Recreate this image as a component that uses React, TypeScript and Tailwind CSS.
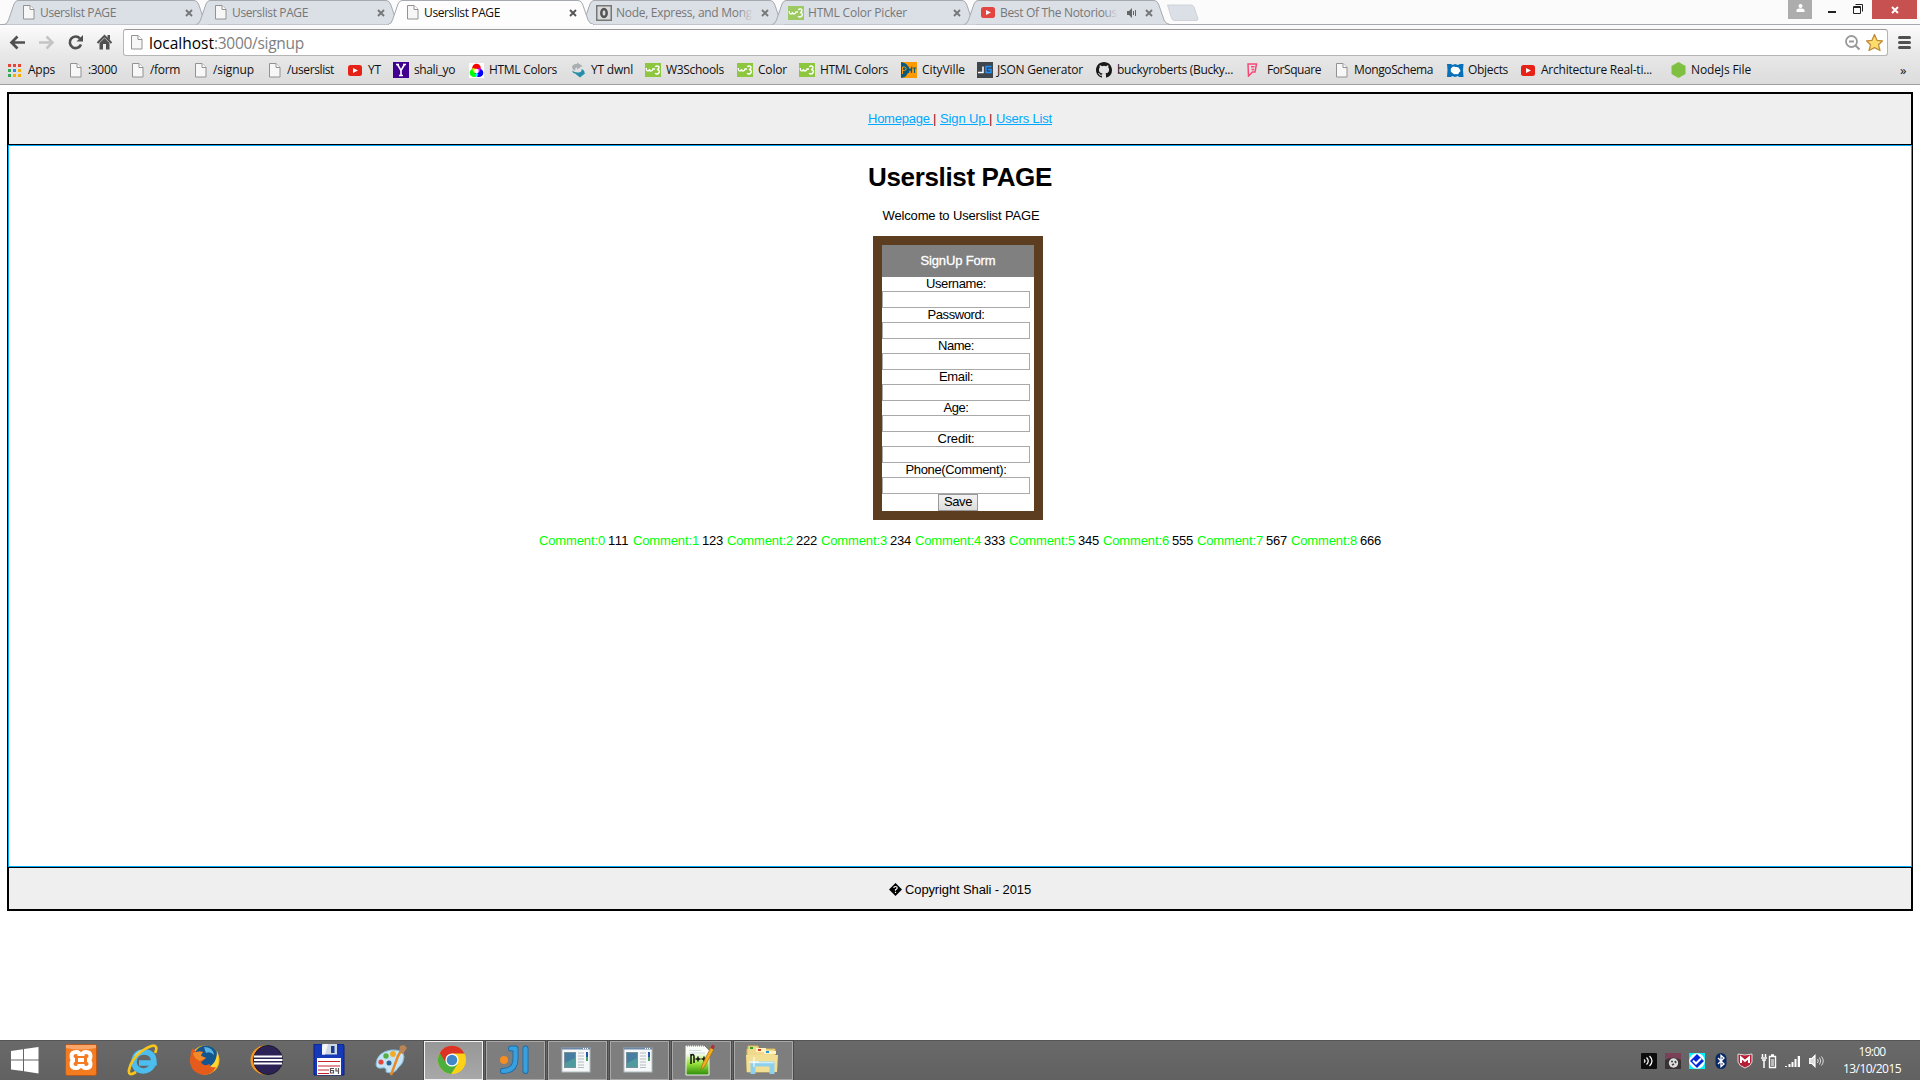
import { useLayoutEffect, useRef, useState, type ReactNode } from "react";

/** One line of text whose tracking is adjusted so that it spans `width` pixels. */
function Fit({ text, width, className = "" }: { text: string; width: number; className?: string }) {
  const ref = useRef<HTMLSpanElement>(null);
  const [spacing, setSpacing] = useState(0);
  useLayoutEffect(() => {
    if (!ref.current) return;
    const natural = ref.current.getBoundingClientRect().width - spacing * text.length;
    setSpacing((width - natural) / text.length);
  }, [text, width]);
  return (
    <span ref={ref} className={`inline-block whitespace-pre ${className}`} style={{ letterSpacing: `${spacing}px` }}>
      {text}
    </span>
  );
}

/* ---------- small icons ---------- */

const PageIcon = () => (
  <svg width="12" height="15" viewBox="0 0 12 15" className="block">
    <path d="M.5 .5H7L11 4.5V14H.5Z" fill="#f7f7f7" stroke="#929292" />
    <path d="M7 .5V4.5H11" fill="#fff" stroke="#929292" />
  </svg>
);
const YouTubeIcon = () => (
  <svg width="14" height="11" viewBox="0 0 14 11" className="block">
    <rect width="14" height="11" rx="2.5" fill="#e62117" />
    <path d="M5 3L10 5.5L5 8Z" fill="#fff" />
  </svg>
);
const W3Icon = () => (
  <svg width="16" height="14" viewBox="0 0 16 14" className="block">
    <rect width="16" height="14" fill="#8dc63f" />
    <path d="M1.300 5V6.500Q1.500 8 3 8Q4.300 8 4.500 6V6.500Q4.800 8 6 8Q7.500 8 8 6H10" fill="none" stroke="#fff" strokeWidth="1.300" />
    <path d="M10.300 4Q11 2.800 12.500 3Q14.200 3.300 14 4.800Q13.700 6.200 12 6.500Q14.600 6.700 14.300 9Q13.800 11.200 11.500 11Q10.500 10.800 10.300 10" fill="none" stroke="#fff" strokeWidth="1.400" />
  </svg>
);
const AppsIcon = () => (
  <svg width="13" height="13" viewBox="0 0 13 13" className="block">
    {["#ea4335", "#ea4335", "#ea4335", "#34a853", "#2a8bf2", "#f9ab00", "#34a853", "#f9ab00", "#f9ab00"].map((c, i) => (
      <rect key={i} x={(i % 3) * 5} y={Math.floor(i / 3) * 5} width="3" height="3" fill={c} />
    ))}
  </svg>
);
const YahooIcon = () => (
  <svg width="16" height="16" viewBox="0 0 16 16" className="block">
    <rect width="16" height="16" fill="#400090" />
    <path d="M3 2.5H6M10 2.5H13M4.5 2.5L8 8.5L11.5 2.5M8 8.5V13.5M6 13.5H10" fill="none" stroke="#fff" strokeWidth="1.6" />
  </svg>
);
const RgbIcon = () => (
  <svg width="15" height="15" viewBox="0 0 15 15" className="block">
    <rect width="15" height="15" fill="#fff" />
    <circle cx="7.5" cy="5" r="4.3" fill="#f00" />
    <circle cx="5" cy="9.7" r="4.3" fill="#0f0" />
    <circle cx="10" cy="9.7" r="4.3" fill="#00f" />
    <path d="M3.5 5.6Q5 5 7.5 6L6 10Q3 8 3.5 5.6Z" fill="#ff0" />
    <path d="M11.5 5.6Q10 5 7.5 6L9 10Q12 8 11.5 5.6Z" fill="#f0f" />
    <path d="M5.5 12L7.5 9L9.4 12L7.5 13.3Z" fill="#0ff" />
    <circle cx="7.5" cy="8" r="2.2" fill="#fff" />
  </svg>
);
const SyncIcon = () => (
  <svg width="15" height="16" viewBox="0 0 15 16" className="block">
    <path d="M1 5.500Q1.500 1.500 6 2V.5L11.500 4L6 7.500V5.500Q3.500 5.500 4.500 8.500Q1.500 8 1 5.500Z" fill="#a9afb0" />
    <path d="M10.500 7Q14 8.500 13.500 11H14.500L9 15.500L4 11.500Q1.500 11 1 8.500Q4 11 8 10.500Q11 10 10.500 7Z" fill="#258fa9" />
  </svg>
);
const PmtIcon = () => (
  <svg width="16" height="16" viewBox="0 0 16 16" className="block">
    <rect width="16" height="16" fill="#f90" />
    <path d="M0 0Q8 1 7.500 8Q7 15 0 16Z" fill="#0a5a7c" />
    <path d="M1.500 12V5H3.500Q5 5 5 6.700Q5 8.500 3.500 8.500H1.500" fill="none" stroke="#f90" />
    <path d="M7.500 11V6L9 8.500L10.500 6V11M11.500 6H15.500M13.500 6V11" fill="none" stroke="#0a5a7c" strokeWidth="1.200" />
  </svg>
);
const JgIcon = () => (
  <svg width="16" height="16" viewBox="0 0 16 16" className="block">
    <rect width="16" height="16" fill="#3f464d" />
    <path d="M1 10.500H6V4.500" fill="none" stroke="#fff" strokeWidth="1.500" />
    <path d="M14.500 4.500H9V10.500H14V7.500H11" fill="none" stroke="#1e90ff" strokeWidth="1.500" />
  </svg>
);
const GitHubIcon = () => (
  <svg width="16" height="16" viewBox="0 0 16 16" className="block">
    <path
      fill="#191717"
      d="M8 0C3.580 0 0 3.580 0 8c0 3.540 2.290 6.530 5.470 7.590.4.070.55-.17.55-.38 0-.19-.01-.82-.01-1.490-2.010.37-2.530-.49-2.690-.94-.09-.23-.48-.94-.82-1.130-.28-.15-.68-.52-.01-.53.63-.01 1.080.58 1.230.82.72 1.210 1.870.87 2.330.66.070-.52.28-.87.51-1.070-1.780-.2-3.640-.89-3.640-3.950 0-.87.31-1.590.82-2.150-.08-.2-.36-1.020.08-2.120 0 0 .67-.21 2.200.82a7.600 7.600 0 014 0c1.530-1.040 2.200-.82 2.200-.82.44 1.100.16 1.920.08 2.120.51.56.82 1.270.82 2.150 0 3.070-1.870 3.750-3.650 3.950.29.25.54.73.54 1.480 0 1.070-.01 1.930-.01 2.200 0 .21.15.46.55.38A8 8 0 0016 8c0-4.420-3.580-8-8-8z"
    />
  </svg>
);
const FoursquareIcon = () => (
  <svg width="11" height="14" viewBox="0 0 11 14" className="block">
    <path d="M1 1H9.500L8 9H5.500L1.500 13Z M7.500 3.700H4M7 6.500H4.500" fill="none" stroke="#f94877" strokeWidth="1.500" />
  </svg>
);
const ObjectsIcon = () => (
  <svg width="17" height="15" viewBox="0 0 17 15" className="block">
    <path d="M0 1H4L5.500 2L8 1L11 2L13 1H16.500L16 7L16.500 14H12L11 13L8 14L5 13L4 14H0L.5 7Z" fill="#0870b8" />
    <path d="M4 5.500Q6 2.500 8.500 4Q12 3.500 12.500 6Q14.500 8 12 9.500Q12 12 9 11Q7 12 5.500 10Q3 9 4 5.500Z" fill="#fff" />
  </svg>
);
const NodeIcon = () => (
  <svg width="15" height="16" viewBox="0 0 15 16" className="block">
    <path d="M7.500 0L14.500 4V12L7.500 16L.5 12V4Z" fill="#7fbf42" />
  </svg>
);
const ExpressIcon = () => (
  <svg width="16" height="16" viewBox="0 0 16 16" className="block">
    <rect x=".75" y=".75" width="14.500" height="14.500" fill="#dadada" stroke="#777" strokeWidth="1.500" />
    <ellipse cx="8" cy="8" rx="2.700" ry="4" fill="none" stroke="#555" strokeWidth="2.500" />
  </svg>
);
const CloseIcon = ({ color }: { color: string }) => (
  <svg width="8" height="8" viewBox="0 0 8 8" className="block">
    <path d="M1 1L7 7M7 1L1 7" stroke={color} strokeWidth="1.900" />
  </svg>
);

/* ---------- tab strip ---------- */

type TabData = { title: string; width: number; icon: ReactNode; small?: boolean; active?: boolean; audio?: boolean };

const tabs: TabData[] = [
  { title: "Userslist PAGE", width: 76, icon: <PageIcon />, small: true },
  { title: "Userslist PAGE", width: 76, icon: <PageIcon />, small: true },
  { title: "Userslist PAGE", width: 76, icon: <PageIcon />, small: true, active: true },
  { title: "Node, Express, and Mong", width: 136, icon: <ExpressIcon /> },
  { title: "HTML Color Picker", width: 99, icon: <div className="opacity-80"><W3Icon /></div> },
  { title: "Best Of The Notorious", width: 117, icon: <div className="pl-px opacity-80"><YouTubeIcon /></div>, audio: true },
];

function Tab({ tab }: { tab: TabData }) {
  return (
    <div className={`relative h-[25px] w-[192px] shrink-0 ${tab.active ? "z-10" : ""}`}>
      <svg width="208" height="25" viewBox="0 0 208 25" className="absolute top-0 left-0">
        <path
          d="M0 24.500Q3 24.500 4.500 20L10 4Q11.500 .5 14 .5H190Q193 .5 194.500 4L200 20Q202 24.500 206 24.500"
          fill={tab.active ? "#fdfdfd" : "#dbdfe6"}
          stroke="#a6a9ad"
        />
        {tab.active && <path d="M1 24.500H205" stroke="#fdfdfd" />}
      </svg>
      <div className="relative flex h-[25px] items-center">
        <div className={tab.small ? "ml-[19px] w-[17px] shrink-0" : "ml-[16px] w-[20px] shrink-0"}>{tab.icon}</div>
        <div className={`relative shrink-0 font-["Open_Sans",sans-serif] text-[12px] leading-[24px] ${tab.audio ? "w-[118px]" : "w-[137px]"} ${tab.active ? "text-[#111]" : "text-[#777]"}`}>
          <Fit text={tab.title} width={tab.width} />
          {tab.width > 110 && <div className="absolute top-[2px] right-0 h-[20px] w-4 bg-linear-to-r from-transparent to-[#dbdfe6]" />}
        </div>
        {tab.audio && (
          <svg width="10" height="10" viewBox="0 0 10 10" className="ml-[9px] shrink-0">
            <path d="M0 3H2L5 0V10L2 7H0Z" fill="#666" />
            <path d="M6.500 3V7M8.500 2V8" stroke="#666" />
          </svg>
        )}
        <div className={tab.audio ? "ml-[8px]" : "ml-[8px]"}>
          <CloseIcon color={tab.active ? "#555" : "#777"} />
        </div>
      </div>
    </div>
  );
}

function TabStrip() {
  return (
    <div className="flex h-[25px] bg-[#fbfbfb] pl-[4px] shadow-[inset_0_-1px_0_#a6a9ad]">
      {tabs.map((t, i) => (
        <Tab key={i} tab={t} />
      ))}
      <svg width="34" height="18" viewBox="0 0 34 18" className="mt-[4px] ml-[10px]">
        <path d="M1.500 1H25Q27 1 28 3L32 15Q32 16.500 30 16.500H9Q6.500 16.500 5.500 14Z" fill="#dbdfe6" stroke="#cfd2d7" />
      </svg>
      <div className="ml-auto mr-[3px] flex h-[19px]">
        <div className="flex w-[24px] justify-center bg-[#adadad] pt-[4px]">
          <svg width="9" height="9" viewBox="0 0 9 9">
            <circle cx="4.500" cy="2" r="2" fill="#fff" />
            <path d="M.5 8V6Q1 4.500 3 4.500H6Q8 4.500 8.500 6V8Z" fill="#fff" />
          </svg>
        </div>
        <div className="w-[36px] pt-[11px] pl-[16px]">
          <div className="h-[2px] w-[8px] bg-[#222]" />
        </div>
        <svg width="24" height="19" viewBox="0 0 24 19">
          <path d="M5.500 6.500H12.500V13.500H5.500ZM5 7.500H13M7.500 4.500H14.500V11.500" fill="none" stroke="#222" />
        </svg>
        <div className="flex w-[45px] items-center justify-center bg-[#c75050]">
          <CloseIcon color="#fff" />
        </div>
      </div>
    </div>
  );
}

/* ---------- toolbar ---------- */

function AddressBar() {
  return (
    <div className="flex h-[35px] items-start pt-[4px]">
      <svg width="123" height="27" viewBox="0 0 123 27" className="shrink-0">
        <path d="M25 13.500H11.500M17.500 7.500L11.500 13.500L17.500 19.500" fill="none" stroke="#505050" strokeWidth="2.700" />
        <path d="M39 13.500H52M46.500 7.500L52.500 13.500L46.500 19.500" fill="none" stroke="#c4c4c4" strokeWidth="2.500" />
        <path d="M80 9.500A5.800 5.800 0 1 0 81 15.500" fill="none" stroke="#505050" strokeWidth="2.600" />
        <path d="M83 6V12.500H76.500Z" fill="#505050" />
        <path d="M97.500 14L104.500 7L111.500 14" fill="none" stroke="#505050" strokeWidth="2" />
        <path d="M99.500 14L104.500 9L109.500 14V20.500H106V15H103V20.500H99.500ZM107.500 6H110V11L107.500 9Z" fill="#505050" />
      </svg>
      <div className="flex h-[27px] w-[1765px] items-center rounded-[3px] border border-[#b5b5b5] border-t-[#999] bg-white pl-[7px]">
        <PageIcon />
        <div className="ml-[6px] whitespace-nowrap font-['Open_Sans',sans-serif] text-[15.500px] leading-[24px]">
          <Fit text="localhost" width={65} className="text-black" />
          <Fit text=":3000/signup" width={90} className="text-[#808080]" />
        </div>
        <svg width="42" height="22" viewBox="0 0 42 22" className="ml-auto mr-[1px]">
          <circle cx="7.500" cy="9.500" r="5.500" fill="none" stroke="#999" strokeWidth="1.800" />
          <path d="M5 9.500H10M11.500 13.500L15.500 17.500" stroke="#999" strokeWidth="2" />
          <path d="M30.500 2.500L33 8.300L38.500 8.800L34.500 12.800L36 18.500L30.500 15.700L25 18.500L26.500 12.800L22.500 8.800L28 8.300Z" fill="#fcdc6b" stroke="#c08c3c" strokeWidth="1.300" strokeLinejoin="round" />
        </svg>
      </div>
      <div className="mt-[7px] ml-[10px] flex w-[13px] flex-col gap-[2px]">
        <div className="h-[3px] rounded-sm bg-[#505050]" />
        <div className="h-[3px] rounded-sm bg-[#505050]" />
        <div className="h-[3px] rounded-sm bg-[#505050]" />
      </div>
    </div>
  );
}

type Bookmark = { x: number; text: number; label: string; width: number; icon: ReactNode };

/* x and text are the left edges of the icon and of the label. */
const bookmarks: Bookmark[] = [
  { x: 8, text: 28, label: "Apps", width: 27, icon: <AppsIcon /> },
  { x: 70, text: 88, label: ":3000", width: 29, icon: <PageIcon /> },
  { x: 132, text: 150, label: "/form", width: 30, icon: <PageIcon /> },
  { x: 195, text: 213, label: "/signup", width: 41, icon: <PageIcon /> },
  { x: 269, text: 287, label: "/userslist", width: 47, icon: <PageIcon /> },
  { x: 348, text: 368, label: "YT", width: 13, icon: <YouTubeIcon /> },
  { x: 393, text: 414, label: "shali_yo", width: 41, icon: <YahooIcon /> },
  { x: 469, text: 489, label: "HTML Colors", width: 68, icon: <RgbIcon /> },
  { x: 571, text: 591, label: "YT dwnl", width: 42, icon: <SyncIcon /> },
  { x: 645, text: 666, label: "W3Schools", width: 58, icon: <W3Icon /> },
  { x: 737, text: 758, label: "Color", width: 29, icon: <W3Icon /> },
  { x: 799, text: 820, label: "HTML Colors", width: 68, icon: <W3Icon /> },
  { x: 901, text: 922, label: "CityVille", width: 43, icon: <PmtIcon /> },
  { x: 977, text: 997, label: "JSON Generator", width: 86, icon: <JgIcon /> },
  { x: 1096, text: 1117, label: "buckyroberts (Bucky...", width: 116, icon: <GitHubIcon /> },
  { x: 1247, text: 1267, label: "ForSquare", width: 54, icon: <FoursquareIcon /> },
  { x: 1336, text: 1354, label: "MongoSchema", width: 79, icon: <PageIcon /> },
  { x: 1447, text: 1468, label: "Objects", width: 40, icon: <ObjectsIcon /> },
  { x: 1521, text: 1541, label: "Architecture Real-ti...", width: 111, icon: <YouTubeIcon /> },
  { x: 1671, text: 1691, label: "NodeJs File", width: 60, icon: <NodeIcon /> },
];

function BookmarksBar() {
  return (
    <div className="flex h-[24px] items-start pl-[8px] font-['Open_Sans',sans-serif] text-[12px] leading-[20px] text-[#111]">
      {bookmarks.map((b, i) => (
        <div key={i} className="flex h-[20px] shrink-0 items-center" style={{ width: (bookmarks[i + 1]?.x ?? 1900) - b.x }}>
          <div className="shrink-0" style={{ width: b.text - b.x }}>
            {b.icon}
          </div>
          <Fit text={b.label} width={b.width} />
        </div>
      ))}
      <span className="text-[13px]">»</span>
    </div>
  );
}

/* ---------- page ---------- */

const fields: [string, number][] = [
  ["Username:", 60],
  ["Password:", 57],
  ["Name:", 36],
  ["Email:", 34],
  ["Age:", 25],
  ["Credit:", 37],
  ["Phone(Comment):", 101],
];
const comments = ["111", "123", "222", "234", "333", "345", "555", "567", "666"];

function SignUpForm() {
  return (
    <div className="relative -left-[2px] mx-auto h-[284px] w-[170px] border-[9px] border-[#5c3d20] bg-white">
      <div className="flex h-[32px] items-center justify-center bg-[#808080] pb-[2px] text-white [-webkit-text-stroke:0.3px_white]">
        <Fit text="SignUp Form" width={75} />
      </div>
      {fields.map(([label, width]) => (
        <label key={label} className="block w-[148px]">
          <div className="h-[14px] leading-[14px]">
            <Fit text={label} width={width} />
          </div>
          <input className="block h-[17px] w-[148px] border border-[#a9a9a9] bg-white" />
        </label>
      ))}
      <button className="mx-auto flex h-[17px] w-[40px] items-center justify-center border border-[#999] bg-linear-to-b from-[#f3f3f3] to-[#dcdcdc] pb-[2px] leading-[13px]">
        <Fit text="Save" width={28} />
      </button>
    </div>
  );
}

function Page() {
  return (
    <div className="h-[955px] bg-white px-[7px] pt-[7px] text-center font-['Liberation_Sans',Arial,sans-serif] text-[13px] leading-[15px] text-black">
      <div className="h-[819px] border border-black">
        <nav className="h-[52px] border border-black bg-[#efefef] pt-[17px] text-[#00a8ff]">
          <a><Fit text="Homepage " width={65} className="underline" /></a>
          <span className="text-[#812]">|</span> <a><Fit text="Sign Up " width={49} className="underline" /></a>
          <span className="text-[#812]">|</span> <a><Fit text="Users List" width={56} className="underline" /></a>
        </nav>
        <main className="h-[722px] border border-[#00a8ff] pt-[16px]">
          <h1 className="h-[30px] text-[26px] leading-[30px] font-bold">
            <Fit text="Userslist PAGE" width={184} />
          </h1>
          <p className="mt-[16px] mb-[13px] h-[15px] pl-[2px]">
            <Fit text="Welcome to Userslist PAGE" width={157} />
          </p>
          <SignUpForm />
          <div className="mt-[13px] flex justify-center">
            {comments.map((c, i) => (
              <div key={i} className={i === comments.length - 1 ? "flex w-[90px]" : "flex w-[94px]"}>
                <Fit text={`Comment:${i}`} width={66} className="text-[#00ff00]" />
                <Fit text={c} width={21} className="ml-[3px]" />
              </div>
            ))}
          </div>
        </main>
        <footer className="h-[43px] border border-black bg-[#efefef] pt-[14px]">
          <div className="flex items-center justify-center">
            <svg width="13" height="13" viewBox="0 0 13 13" className="mr-[3px]">
              <path d="M6.500 0L13 6.500L6.500 13L0 6.500Z" fill="#000" />
              <path d="M4.800 5Q4.800 3.500 6.500 3.500T8.200 5Q8.200 6 6.500 6.700V7.800M6.500 8.700V10" fill="none" stroke="#fff" strokeWidth="1.200" />
            </svg>
            <Fit text="Copyright Shali - 2015" width={126} />
          </div>
        </footer>
      </div>
    </div>
  );
}

/* ---------- taskbar ---------- */

const Xampp = () => (
  <svg width="32" height="32" viewBox="0 0 32 32">
    <rect x=".5" y=".5" width="31" height="31" rx="2" fill="#f47b20" stroke="#b9581b" />
    <path d="M1 1H31V4Q16 7 1 4Z" fill="#faa66b" />
    <path d="M14.500 12V11Q14.500 8 11 8Q6.500 8 6.500 12Q6.500 16 10 16Q6.500 16 6.500 20Q6.500 24 11 24Q14.500 24 14.500 21V20M17.500 12V11Q17.500 8 21 8Q25.500 8 25.500 12Q25.500 16 22 16Q25.500 16 25.500 20Q25.500 24 21 24Q17.500 24 17.500 21V20M13 16H19" fill="none" stroke="#fff" strokeWidth="4" />
  </svg>
);
const InternetExplorer = () => (
  <svg width="32" height="32" viewBox="0 0 32 32">
    <path d="M26 21Q22 27 16 27Q7 26 7 17.500Q8 8 17 8Q27 8 27 19H12" fill="none" stroke="#4bbdee" strokeWidth="5.500" />
    <path d="M8 12Q12 6 18 6" fill="none" stroke="#a5e4fb" strokeWidth="1.500" />
    <path d="M9 28Q1 33 2 26Q4 15 15 7Q27-1 29 3Q30 5 28 9" fill="none" stroke="#f7c51c" strokeWidth="2.700" />
  </svg>
);
const Firefox = () => (
  <svg width="32" height="32" viewBox="0 0 32 32">
    <circle cx="16" cy="16" r="14.500" fill="#f9b522" />
    <circle cx="17" cy="13.500" r="12" fill="#14568e" />
    <path d="M15 3Q24 3 25 11Q21 7 17 9Z" fill="#5ab4e2" />
    <path d="M28 7Q32 18 26 25Q20 31 13 29L14 24Q28 23 28 7Z" fill="#fdd835" />
    <path d="M2 8L4 4L7 8Q11 7 14 8Q12 10 12 12L17 14Q14 17 12 18Q14 23 21 20Q20 24 27 23Q23 31 14 31Q1 28 1 16Z" fill="#e55b1c" />
    <path d="M4 9L7 8Q11 7 14 8Q12 10 12 12L17 14L11 17Q5 15 4 9Z" fill="#f38a29" />
  </svg>
);
const Eclipse = () => (
  <svg width="34" height="32" viewBox="0 0 34 32">
    <circle cx="15" cy="16" r="14.500" fill="#f7941e" />
    <circle cx="18" cy="16" r="14.500" fill="#2c2255" stroke="#1b1a28" />
    <path d="M4 12.500H32M4 16H32.500M4 19.500H32" stroke="#fff" strokeWidth="2" />
  </svg>
);
const Floppy = () => (
  <svg width="32" height="32" viewBox="0 0 32 32">
    <path d="M1 0H30L31 2V31H1Z" fill="#1539b8" stroke="#0a1f80" />
    <rect x="9" y="0" width="15" height="10.500" fill="#cfd8e2" />
    <path d="M11 0H15L12 10.500H9V3Z" fill="#f4f7fa" />
    <rect x="18" y="2" width="3.500" height="7" fill="#1b3a94" />
    <rect x="4" y="14" width="24" height="17" fill="#fff" />
    <path d="M5 17.500H27M5 22H27M5 26H16M5 29.500H16" stroke="#c4232e" />
    <path d="M21 24.500H17.500V29H20.500V26.500H18M23 24V27H26M25.500 24V30" fill="none" stroke="#555" strokeWidth="1.200" />
  </svg>
);
const Paint = () => (
  <svg width="32" height="32" viewBox="0 0 32 32">
    <path d="M1 20Q2 8 16 6Q29 5 29 13Q29 19 23 24Q19 31 11 28Q12 23 7 24Q1 25 1 20Z" fill="#c5e4f5" stroke="#80b8d8" />
    <circle cx="6" cy="18" r="2.600" fill="#e2483c" />
    <circle cx="11" cy="12" r="2.700" fill="#55ae45" />
    <circle cx="18" cy="10" r="2.900" fill="#f1ad25" />
    <circle cx="14" cy="19" r="2.500" fill="#2b6595" />
    <path d="M16 31L23 12L26 7" fill="none" stroke="#e78a25" strokeWidth="2.500" />
    <path d="M24 8L25 2L29 1L32 4L28 10Z" fill="#b98556" />
  </svg>
);
const Chrome = () => (
  <svg width="30" height="30" viewBox="0 0 30 30">
    <circle cx="15" cy="15" r="14" fill="#fcd116" />
    <path d="M15 15L2.800 8A14 14 0 0 0 14 29L21 18.500Z" fill="#4caf3d" />
    <path d="M15 15V8.500H27.500A14 14 0 0 0 2.800 8L9 18Z" fill="#dc3326" />
    <circle cx="15" cy="15" r="6.600" fill="#fff" />
    <circle cx="15" cy="15" r="5.300" fill="#3f87c9" />
  </svg>
);
const JetBrains = () => (
  <svg width="30" height="30" viewBox="0 0 30 30">
    <path d="M12 3.500H16.500V14Q16.500 25.500 4 26M26.500 3.500V26" fill="none" stroke="#1a6cab" strokeWidth="6" strokeLinecap="round" strokeLinejoin="round" />
    <path d="M12 3.500H16.500V14Q16.500 25.500 4 26M26.500 3.500V26" fill="none" stroke="#38a0df" strokeWidth="4.200" strokeLinecap="round" strokeLinejoin="round" />
    <circle cx="5" cy="15" r="4" fill="#f58d20" />
  </svg>
);
const AppWindow = () => (
  <svg width="30" height="26" viewBox="0 0 30 26">
    <rect x="1" y="1" width="28" height="24" fill="#f5f7f8" stroke="#b2bbc1" />
    <path d="M1 1.500H29" stroke="#6d87a6" strokeWidth="2" />
    <path d="M22 1.500H28" stroke="#fff" strokeDasharray="1 1" />
    <rect x="3.500" y="5.500" width="11" height="15" fill="#4f9a9d" stroke="#78909c" />
    <path d="M4 6H14V11L4 16Z" fill="#487da2" />
    <path d="M17 6H23M17 9H23M17 12H23M17 15H23M17 18H23M17 20.500H23" stroke="#b5bcc2" />
    <path d="M26 5V10" stroke="#2355a8" strokeWidth="2" />
    <path d="M26 10V14" stroke="#4ca266" strokeWidth="2" />
  </svg>
);
const NotepadPlus = () => (
  <svg width="32" height="34" viewBox="0 0 32 34">
    <defs>
      <linearGradient id="notepad" x1="0" y1="0" x2="0" y2="1">
        <stop offset="0.250" stopColor="#fbfef7" />
        <stop offset="0.600" stopColor="#9ae33c" />
        <stop offset="1" stopColor="#2c8a08" />
      </linearGradient>
    </defs>
    <path d="M2 3H20L25 8V32H2Z" fill="url(#notepad)" stroke="#f3f3f3" />
    <path d="M3 2.500H20" stroke="#888" strokeWidth="2" strokeDasharray="1 1" />
    <path d="M5 7.500H17M5 10H21" stroke="#cdd9e5" />
    <path d="M7 21V11M7 13Q9 10 10 13V20M11.500 16H16.500M14 13.500V18.500M17.500 16H22.500M20 13.500V18.500" fill="none" stroke="#111" strokeWidth="1.500" />
    <path d="M17 27L18.500 21L27 4L30 6L21 23Z" fill="#f5ad22" stroke="#a46b16" strokeWidth=".7" />
    <path d="M26.500 5L28 1.500L31 3L29.500 6.500Z" fill="#a9333b" />
  </svg>
);
const Explorer = () => (
  <svg width="34" height="32" viewBox="0 0 34 32">
    <path d="M3 5V2H13L14 5H30V28H2V5Z" fill="#f0d98a" stroke="#d7b95e" />
    <path d="M11 6V4H21V7H31V10H19V8H11Z" fill="#fff3c0" />
    <path d="M5 4H8" stroke="#27a52d" strokeWidth="2" />
    <path d="M13 6H16" stroke="#cf3b25" strokeWidth="2" />
    <path d="M21 8H24" stroke="#2693dc" strokeWidth="2" />
    <path d="M1 11H33L32 28H2Z" fill="#f3df94" />
    <path d="M8 30V20H27V30" fill="none" stroke="#8ed0ec" strokeWidth="5" />
    <path d="M6 18.500H29" stroke="#cdeefa" strokeWidth="1.500" />
    <path d="M9 13V23M4 18H14" stroke="#fff" />
  </svg>
);

const pinned = [<Xampp />, <InternetExplorer />, <Firefox />, <Eclipse />, <Floppy />, <Paint />];
const running = [<Chrome />, <JetBrains />, <AppWindow />, <AppWindow />, <NotepadPlus />, <Explorer />];

function Tray() {
  return (
    <div className="ml-auto flex items-center gap-[8px]">
      <svg width="16" height="16" viewBox="0 0 16 16">
        <rect width="16" height="16" rx="1" fill="#0c0c0c" />
        <path d="M3 6.500Q5 8 3 9.500M5.500 4.500Q9 8 5.500 11.500M8.500 3Q13.500 8 8.500 13" fill="none" stroke="#fff" strokeWidth="1.200" />
      </svg>
      <svg width="16" height="16" viewBox="0 0 16 16">
        <rect width="16" height="16" fill="#3a3336" />
        <path d="M0 0H16V7Q8 2 0 7Z" fill="#7a4057" />
        <circle cx="8.500" cy="10" r="4.700" fill="#ddd" />
        <path d="M6 8.500H8M10 8L11 10M7 12L9 11" fill="none" stroke="#444" strokeWidth="1.700" />
      </svg>
      <svg width="16" height="16" viewBox="0 0 16 16">
        <rect width="16" height="16" fill="#00f0ff" />
        <circle cx="8" cy="8" r="7.800" fill="#fff" />
        <path d="M8 1L15 8L8 15L1 8Z" fill="#0026dc" />
        <path d="M4 7.500L7 10.500L12 5.500" fill="none" stroke="#fff" strokeWidth="2" />
      </svg>
      <svg width="16" height="16" viewBox="0 0 16 16">
        <rect x="2.500" y="0" width="11" height="16" rx="5.500" fill="#0a2a66" />
        <path d="M5 5L11 11L8 13.500V2.500L11 5L5 11" fill="none" stroke="#fff" strokeWidth="1.300" />
      </svg>
      <svg width="16" height="16" viewBox="0 0 16 16">
        <path d="M1 1L8 2L15 1V9Q14 13 8 15Q2 13 1 9Z" fill="#b51e36" stroke="#ddd" />
        <path d="M4 10V4.500L8 8L12 4.500V10" fill="none" stroke="#fff" strokeWidth="2" />
      </svg>
      <svg width="16" height="16" viewBox="0 0 16 16">
        <path d="M8.500 3.500H14.500V14.500H8.500ZM10 2H13" fill="none" stroke="#fff" strokeWidth="1.400" />
        <path d="M1.500 1V4M4.500 1V4M0 5H6M1 7H5M3 7V15" fill="none" stroke="#fff" strokeWidth="1.500" />
        <path d="M10 6H13V13H10Z" fill="#bbb" />
      </svg>
      <svg width="16" height="16" viewBox="0 0 16 16">
        <path d="M0 13H2V14H0ZM3.500 11H5.500V14H3.500ZM6.500 9H8.500V14H6.500ZM9.500 6H11.500V14H9.500ZM12.700 3H15V14H12.700Z" fill="#fff" />
      </svg>
      <svg width="16" height="16" viewBox="0 0 16 16">
        <path d="M.7 5.500H3L6 2.500V13.500L3 10.500H.7Z" fill="#ddd" stroke="#fff" strokeWidth="1.200" />
        <path d="M8.500 6Q10 8 8.500 10M10.500 4.500Q13 8 10.500 11.500M12.500 3.500Q16 8 12.500 12.500" fill="none" stroke="#ddd" />
      </svg>
      <div className="ml-[9px] mr-[18px] flex w-[60px] flex-col items-center pb-px font-['Open_Sans',sans-serif] text-[12px] leading-[17px] text-white">
        <Fit text="19:00" width={27} />
        <Fit text="13/10/2015" width={58} />
      </div>
    </div>
  );
}

function Taskbar() {
  return (
    <div className="flex h-[40px] border-t border-[#555] bg-linear-to-b from-[#696969] to-[#616161]">
      <div className="flex w-[50px] items-center pb-px pl-[11px]">
        <svg width="28" height="27" viewBox="0 0 28 27">
          <path d="M0 4L12 2.300V12.500H0ZM13 2L27.500 0V12.500H13ZM0 13.500H12V24L0 22.500ZM13 13.500H27.500V26.500L13 24.300Z" fill="#fff" />
        </svg>
      </div>
      {pinned.map((icon, i) => (
        <div key={i} className="flex w-[62px] items-center justify-center pb-px">{icon}</div>
      ))}
      {running.map((icon, i) => (
        <div key={i} className="w-[62px] px-px">
          <div
            className={`ml-px flex h-[39px] w-[59px] items-center justify-center border pr-[3px] pb-px shadow-[0_0_0_1px_#4a4a4a] ${
              i === 0 ? "border-[#f2f2f2] bg-linear-to-b from-[#979797] to-[#a8a8a8]" : "border-[#a8a8a8] bg-[#7e7e7e]"
            }`}
          >
            {icon}
          </div>
        </div>
      ))}
      <Tray />
    </div>
  );
}

export default function App() {
  return (
    <div className="h-[1080px] w-[1920px] overflow-hidden bg-white">
      <TabStrip />
      <div className="h-[60px] border-b border-[#a0a0a0] bg-linear-to-b from-[#fcfcfc] via-[#e8e8e8] to-[#dcdcdc]">
        <AddressBar />
        <BookmarksBar />
      </div>
      <Page />
      <Taskbar />
    </div>
  );
}
